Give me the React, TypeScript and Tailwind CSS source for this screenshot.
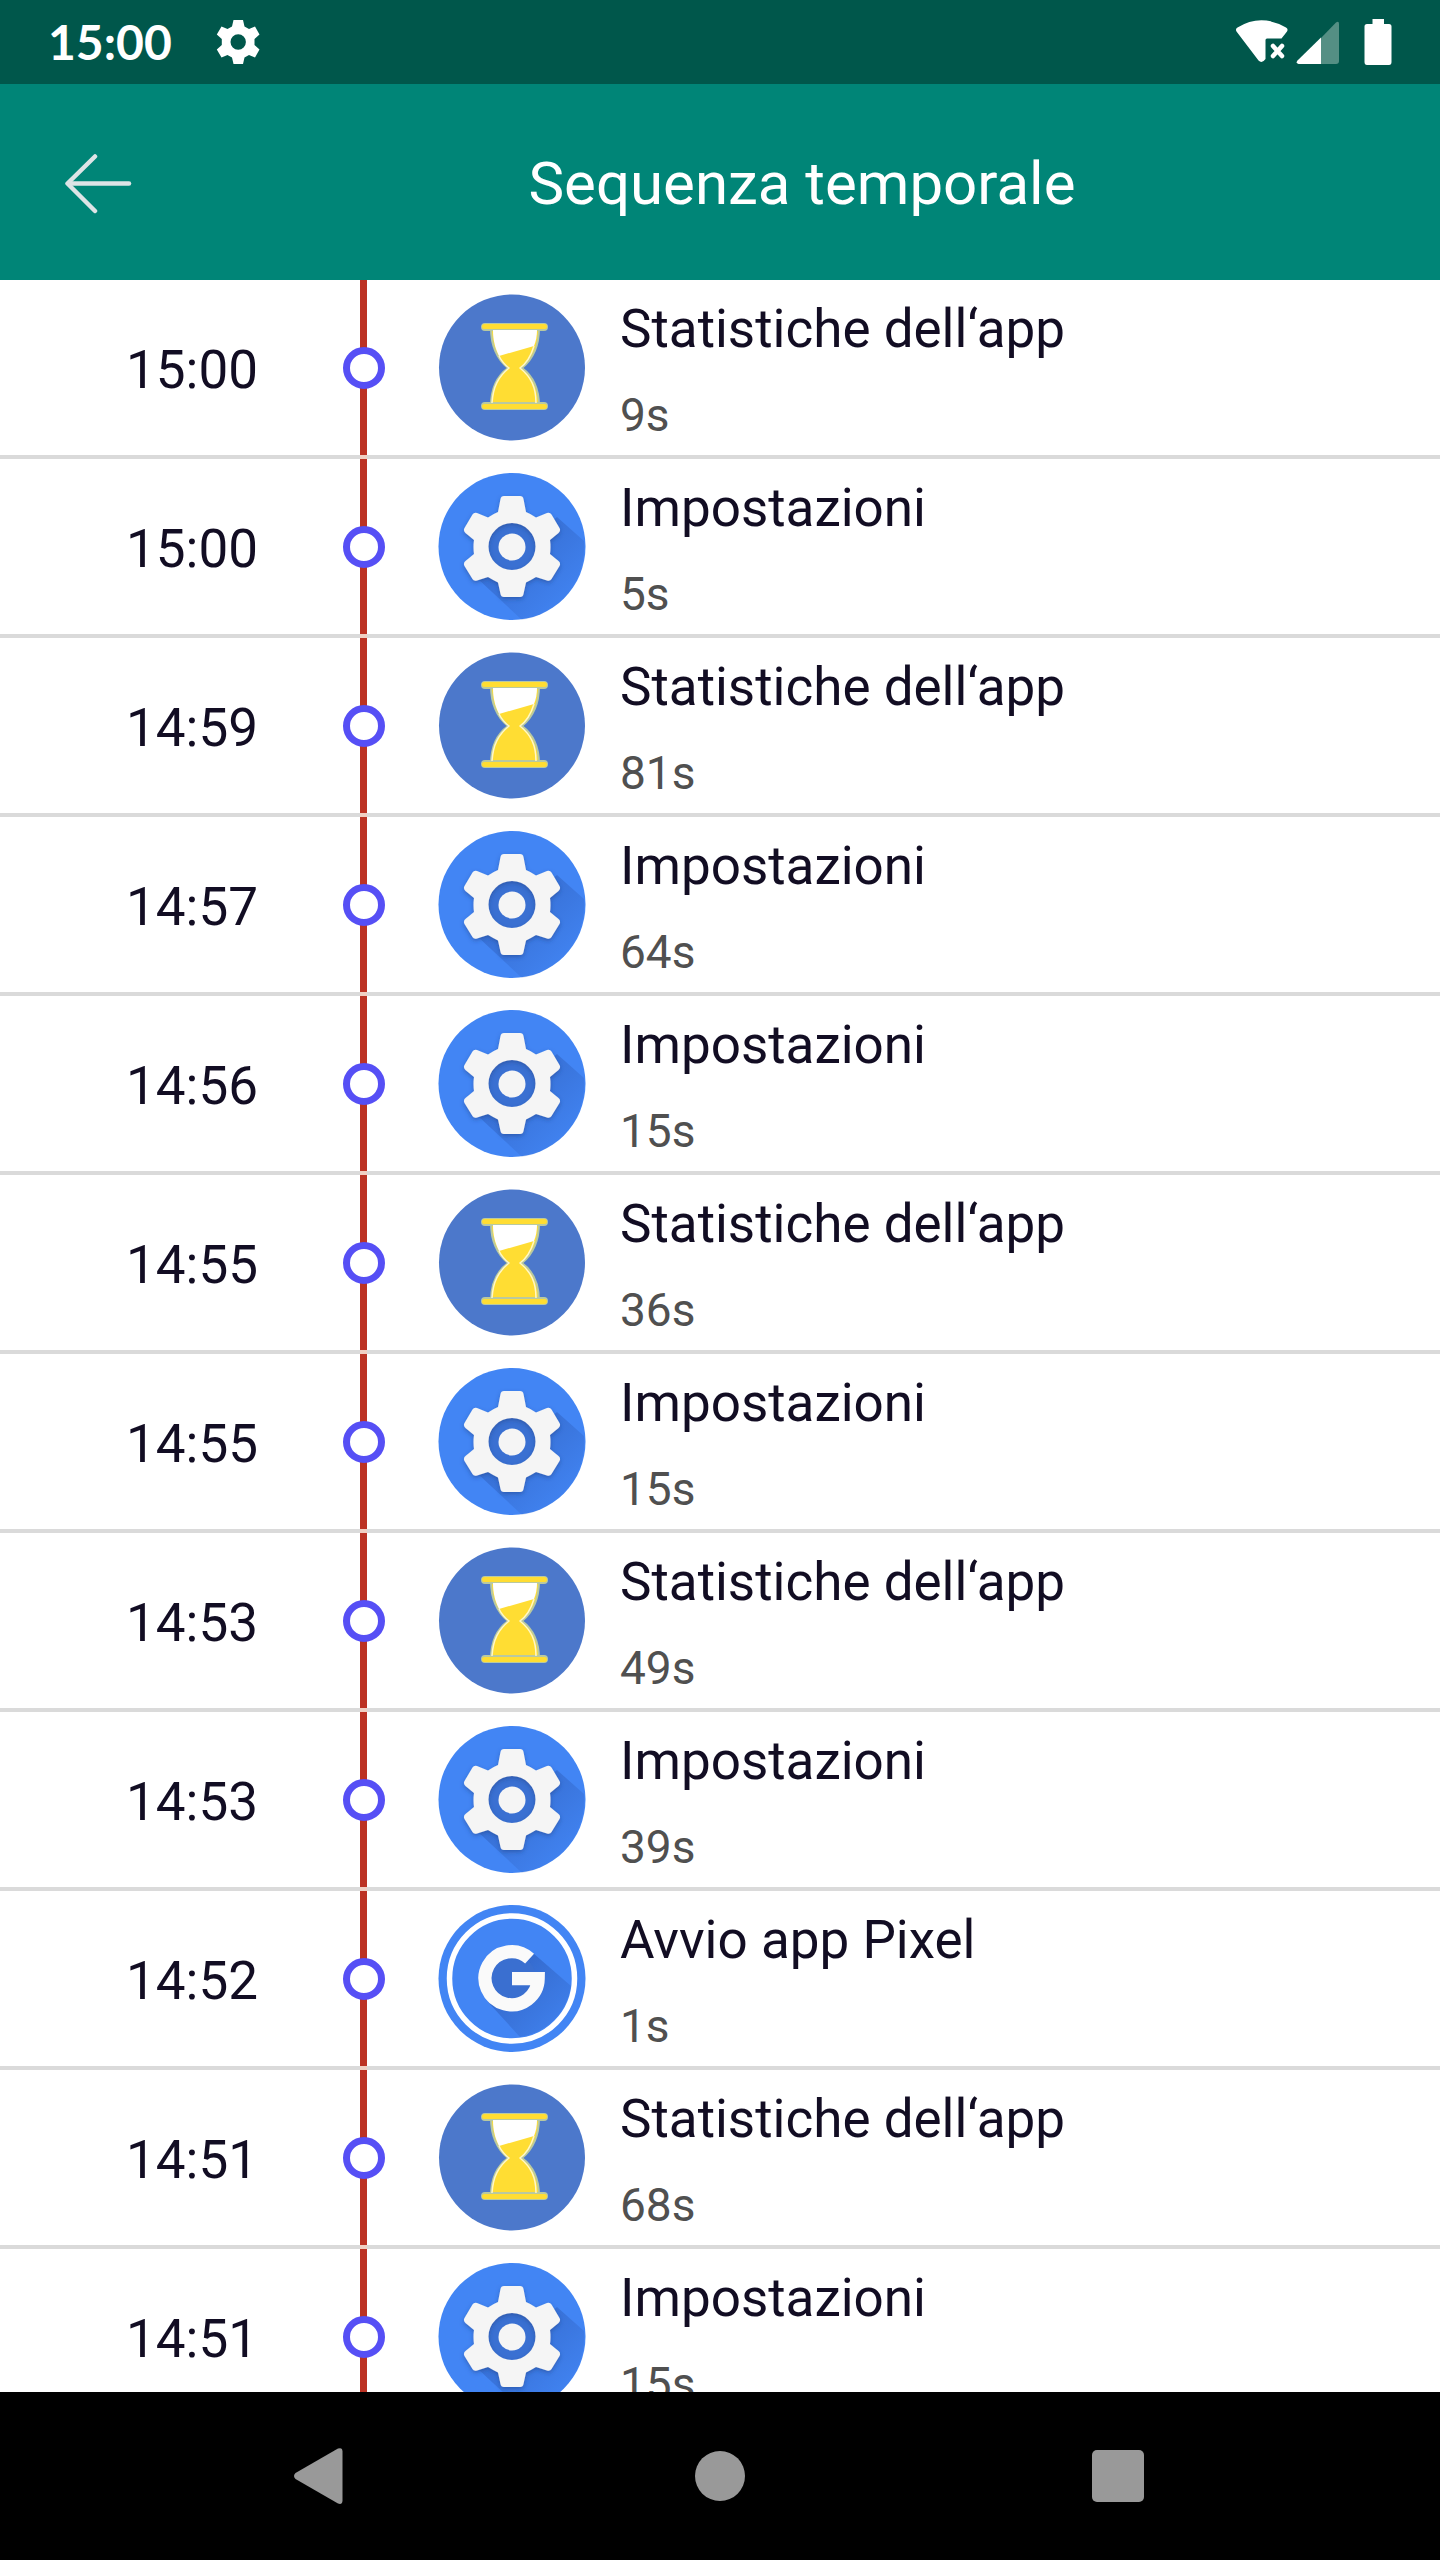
import React from 'react'

type AppKind = 'stats' | 'settings' | 'launcher'

interface TimelineEntry {
  time: string
  app: AppKind
  seconds: number
}

const appNames: Record<AppKind, string> = {
  stats: 'Statistiche dell‘app',
  settings: 'Impostazioni',
  launcher: 'Avvio app Pixel',
}

const entries: TimelineEntry[] = [
  { time: '15:00', app: 'stats', seconds: 9 },
  { time: '15:00', app: 'settings', seconds: 5 },
  { time: '14:59', app: 'stats', seconds: 81 },
  { time: '14:57', app: 'settings', seconds: 64 },
  { time: '14:56', app: 'settings', seconds: 15 },
  { time: '14:55', app: 'stats', seconds: 36 },
  { time: '14:55', app: 'settings', seconds: 15 },
  { time: '14:53', app: 'stats', seconds: 49 },
  { time: '14:53', app: 'settings', seconds: 39 },
  { time: '14:52', app: 'launcher', seconds: 1 },
  { time: '14:51', app: 'stats', seconds: 68 },
  { time: '14:51', app: 'settings', seconds: 15 },
]

const StatsIcon = () => (
  <svg viewBox="0 0 148 148" className="size-37 shrink-0" aria-hidden="true">
    <circle cx="74" cy="73.5" r="73" fill="#4c78cb" />
    <g stroke="#b9c9a0" strokeWidth="2">
      <path d="M53 34H101C101 52 95 65 84 74C95 82 101 94 101 112H53C53 94 59 82 70 74C59 65 53 52 53 34Z" fill="#ffdd33" />
      <rect x="44" y="30" width="65" height="6" rx="3" fill="#ffdd33" />
      <rect x="44" y="109" width="65" height="6" rx="3" fill="#ffdd33" />
    </g>
    <path d="M55 36H99C99 42 98 47 96 52L61 62C57 54 55 46 55 36Z" fill="#fff" />
    <path d="M61 62C64 68 67 71 71 74C60 83 55 93 54 109M96 52C93 62 89 69 82 74C93 83 98 93 98 109" fill="none" stroke="#fff8c8" strokeWidth="1.5" />
    <rect x="44" y="30" width="65" height="5" rx="2.5" fill="#ffdd33" />
    <rect x="44" y="110" width="65" height="5" rx="2.5" fill="#ffdd33" />
  </svg>
)

const SettingsIcon = () => (
  <svg viewBox="0 0 148 148" className="size-37 shrink-0" aria-hidden="true">
    <defs>
      <linearGradient id="gear-shade" x1="0.4" y1="0.4" x2="0.9" y2="0.9">
        <stop offset="0" stopColor="#2a56b0" stopOpacity="0.4" />
        <stop offset="1" stopColor="#2a56b0" stopOpacity="0" />
      </linearGradient>
      <filter id="gear-drop" x="-20%" y="-20%" width="140%" height="140%">
        <feDropShadow dx="0" dy="2" stdDeviation="2" floodColor="#1d3f87" floodOpacity="0.5" />
      </filter>
    </defs>
    <circle cx="74" cy="73.5" r="73.5" fill="#4285f4" />
    <path d="M119 44L146 68A73.5 73.5 0 0 1 84 147L40 106Z" fill="url(#gear-shade)" />
    <circle cx="74" cy="74" r="28" fill="#3a70d2" />
    <path
      fillRule="evenodd"
      filter="url(#gear-drop)"
      fill="#f5f5f5"
      d="M66 23H82Q85 23 85.500 26L88 39Q93 41 98 44.500L109 40Q112 39 113.500 41.500L121.500 55Q123 58 120.500 60L112 67Q113 74 112 81L120.500 88Q123 90 121.500 93L113.500 106Q112 108.500 109 107.500L98 104Q93 107 88 109.500L85.500 121Q85 124 82 124H66Q63 124 62.500 121L60 109.500Q55 107 50 104L39 107.500Q36 108.500 34.500 106L26.500 93Q25 90 27.500 88L36 81Q35 74 36 67L27.500 60Q25 58 26.500 55L34.500 41.500Q36 39 39 40L50 44.500Q55 41 60 39L62.500 26Q63 23 66 23ZM74 50A23.500 23.500 0 1 0 74 97A23.500 23.500 0 1 0 74 50Z"
    />
    <circle cx="74" cy="74" r="13.500" fill="#f5f5f5" />
  </svg>
)

const LauncherIcon = () => (
  <svg viewBox="0 0 148 148" className="size-37 shrink-0" aria-hidden="true">
    <defs>
      <linearGradient id="launcher-shade" x1="0.2" y1="0.2" x2="0.9" y2="0.9">
        <stop offset="0" stopColor="#2a56b0" stopOpacity="0.6" />
        <stop offset="1" stopColor="#2a56b0" stopOpacity="0.1" />
      </linearGradient>
    </defs>
    <circle cx="74" cy="73.5" r="73.5" fill="#4285f4" />
    <path d="M95 48L133 81A60 60 0 0 1 82 132L50 97Z" fill="url(#launcher-shade)" />
    <circle cx="74" cy="73.5" r="24" fill="#3a6fd0" />
    <circle cx="74" cy="73.5" r="62.5" fill="none" stroke="#fff" strokeWidth="5.500" />
    <path d="M91.600 53.600A26.600 26.600 0 1 0 100.200 73.700H74" fill="none" stroke="#fafafa" strokeWidth="13.200" />
  </svg>
)

const appIcons: Record<AppKind, React.FC> = {
  stats: StatsIcon,
  settings: SettingsIcon,
  launcher: LauncherIcon,
}

const StatusBar = () => (
  <div className="flex h-21 shrink-0 items-center bg-[#00574b] px-12 text-white">
    <span className="font-['Lato',sans-serif] text-[48px] leading-none font-bold">15:00</span>
    <svg viewBox="0 0 44 46" className="ml-11 h-[46px] w-11" aria-hidden="true">
      <path
        fillRule="evenodd"
        fill="#fff"
        d="M17.500 1H27L28.500 7.500L33 10L39 7.500L43.500 15.500L38.500 20V26L43.500 30.500L39 38.500L33 36L28.500 38.500L27 45H17.500L16 38.500L11.500 36L5.500 38.500L.8 30.500L5.800 26V20L.8 15.500L5.500 7.500L11.500 10L16 7.500ZM22.200 15.300A7.700 7.700 0 1 0 22.200 30.700A7.700 7.700 0 1 0 22.200 15.300Z"
      />
    </svg>
    <div className="ml-auto flex items-center">
      <svg viewBox="0 0 56 46" className="h-[46px] w-14" aria-hidden="true">
        <path fill="#fff" d="M2.500 12.500Q1 10 3.500 8.500Q27 -6 52 8.500Q54.500 10 53 12.500L47.500 19.500H33Q31.500 19.500 31.500 21V40Q28 45 24.500 41.500Z" />
        <path stroke="#fff" strokeWidth="4.500" strokeLinecap="round" d="M39 27L48 37M48 27L39 37" />
      </svg>
      <svg viewBox="0 0 44 46" className="ml-1.5 h-[46px] w-11" aria-hidden="true">
        <path fill="#548f84" d="M25 19L40 3.500Q43 1.500 43 5V42Q43 45 40 45H25Z" />
        <path fill="#fff" d="M25 18.500V45H2.500Q-.5 44 1.500 41.500Z" />
      </svg>
      <svg viewBox="0 0 28 46" className="ml-6 h-[46px] w-7" aria-hidden="true">
        <path fill="#fff" d="M8.500 0H20V5H25Q27.500 5 27.500 7.500V43Q27.500 46 25 46H3Q.5 46 .5 43V7.500Q.5 5 3 5H8.500Z" />
      </svg>
    </div>
  </div>
)

const AppBar = () => (
  <header className="flex h-49 shrink-0 items-center bg-[#008577] text-white">
    <button type="button" aria-label="Indietro" className="flex w-41 shrink-0 justify-center pt-1 pl-8">
      <svg viewBox="0 0 68 60" className="h-15 w-17" fill="none" stroke="#dde4e6" strokeWidth="4.500" strokeLinecap="round" strokeLinejoin="round">
        <path d="M31 2.500L3.500 29.500L31 57" />
        <path d="M5 29.500H65" />
      </svg>
    </button>
    <h1 className="flex-1 pt-1 text-center text-[60px] leading-none">Sequenza temporale</h1>
  </header>
)

const TimelineRow: React.FC<{ entry: TimelineEntry }> = ({ entry }) => {
  const Icon = appIcons[entry.app]

  return (
    <li className="flex h-[179px] shrink-0 items-stretch border-b-4 border-[#dadada]">
      <time className="w-[343px] shrink-0 self-center pt-1.5 pl-[126px] text-[53px] leading-none">{entry.time}</time>
      <div className="relative flex w-[42px] shrink-0 items-center justify-center">
        <span className="absolute inset-y-0 left-[17px] w-[7px] bg-[#bc3223]" />
        <span className="absolute top-full left-[17px] h-1 w-[7px] bg-[#f0cfc2]" />
        <span className="relative size-[42px] rounded-full border-[7px] border-[#564ff5] bg-white" />
      </div>
      <div className="ml-[53px] flex items-center">
        <Icon />
        <div className="ml-[34px] self-stretch pt-[18px]">
          <p className="text-[53px] leading-[62px]">{appNames[entry.app]}</p>
          <p className="mt-7 text-[46px] leading-[54px] text-[#505050]">{entry.seconds}s</p>
        </div>
      </div>
    </li>
  )
}

const NavBar = () => (
  <nav className="h-42 shrink-0 bg-black">
    <div className="mx-auto grid h-full w-[83%] grid-cols-3">
      <button type="button" aria-label="Indietro" className="flex items-center justify-center">
        <svg viewBox="0 0 56 56" className="size-14" fill="#999" aria-hidden="true">
          <path d="M44 .5Q48.500 -1 48.500 3.500V52.500Q48.500 57 44 55.500L1.500 31Q-1.500 28 1.500 25Z" />
        </svg>
      </button>
      <button type="button" aria-label="Home" className="flex items-center justify-center">
        <span className="size-[50px] rounded-full bg-[#999]" />
      </button>
      <button type="button" aria-label="App recenti" className="flex items-center justify-center">
        <span className="size-[52px] rounded-[5px] bg-[#999]" />
      </button>
    </div>
  </nav>
)

export default function App() {
  return (
    <div className="flex h-screen flex-col overflow-hidden bg-white font-['Roboto',sans-serif] text-[#120d23]">
      <StatusBar />
      <AppBar />
      <main className="min-h-0 flex-1 overflow-hidden">
        <ul className="flex flex-col">
          {entries.map((entry, i) => (
            <TimelineRow key={i} entry={entry} />
          ))}
        </ul>
      </main>
      <NavBar />
    </div>
  )
}
